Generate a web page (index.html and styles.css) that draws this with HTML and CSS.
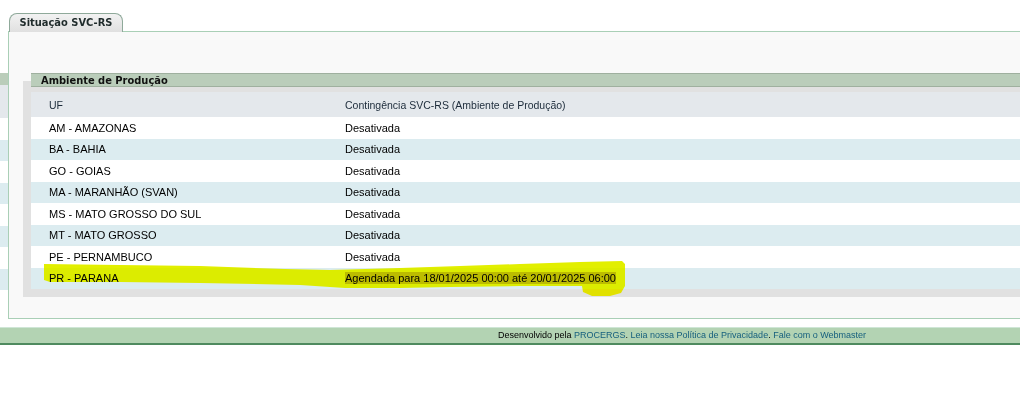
FILE: index.html
```html
<!DOCTYPE html>
<html lang="pt-BR">
<head>
<meta charset="utf-8">
<title>Situação SVC-RS</title>
<link rel="stylesheet" href="styles.css">
</head>
<body>
<div class="wrap">
  <div class="tabs">
    <div class="tab">Situação SVC-RS</div>
  </div>
  <div class="stage">
    <div class="stub">
      <div class="stub-head"></div>
      <div class="stub-row stub-th"></div>
      <div class="stub-row"></div>
      <div class="stub-row alt"></div>
      <div class="stub-row"></div>
      <div class="stub-row alt"></div>
      <div class="stub-row"></div>
      <div class="stub-row alt"></div>
      <div class="stub-row"></div>
      <div class="stub-row alt"></div>
    </div>
    <div class="panel">
      <div class="section">
        <div class="section-title">Ambiente de Produção</div>
        <table class="grid">
          <thead>
            <tr><th class="c1">UF</th><th>Contingência SVC-RS (Ambiente de Produção)</th></tr>
          </thead>
          <tbody>
            <tr><td class="c1">AM - AMAZONAS</td><td>Desativada</td></tr>
            <tr class="alt"><td class="c1">BA - BAHIA</td><td>Desativada</td></tr>
            <tr><td class="c1">GO - GOIAS</td><td>Desativada</td></tr>
            <tr class="alt"><td class="c1">MA - MARANHÃO (SVAN)</td><td>Desativada</td></tr>
            <tr><td class="c1">MS - MATO GROSSO DO SUL</td><td>Desativada</td></tr>
            <tr class="alt"><td class="c1">MT - MATO GROSSO</td><td>Desativada</td></tr>
            <tr><td class="c1">PE - PERNAMBUCO</td><td>Desativada</td></tr>
            <tr class="alt"><td class="c1">PR - PARANA</td><td><span class="sel">Agendada para 18/01/2025 00:00 até 20/01/2025 06:00</span></td></tr>
          </tbody>
        </table>
      </div>
    </div>
  </div>
  <div class="footer">
    Desenvolvido pela <a href="#">PROCERGS</a>. <a href="#">Leia nossa Política de Privacidade</a>. <a href="#">Fale com o Webmaster</a>
  </div>
  <svg class="marker" width="1020" height="407" viewBox="0 0 1020 407" aria-hidden="true">
    <path d="M44 264 L120 265 L200 266 L285 269 L330 270 L400 268 L460 266 L520 264 L580 262 L622 261 L625 264 L625 286 L621 293 L610 296 L592 296 L583 292 L582 286 L520 286 L450 287 L400 288 L345 288 L300 285 L200 283 L120 282 L50 282 L44 280 Z" fill="#e2ef00"/>
  </svg>
</div>
</body>
</html>
```

FILE: styles.css
```css
html, body {
  margin: 0;
  padding: 0;
  background: #ffffff;
  overflow: hidden;
}

.wrap {
  position: relative;
  width: 1364px;
  padding-top: 13px;
  font-family: "Liberation Sans", Arial, sans-serif;
}

.tabs {
  display: flex;
  padding-left: 9px;
  height: 18px;
}

.tab {
  box-sizing: border-box;
  width: 114px;
  height: 19px;
  border: 1px solid #8fa99a;
  border-bottom: none;
  border-radius: 8px 8px 0 0;
  background: linear-gradient(#f2f2f2, #e0e0e0);
  font-family: "DejaVu Sans Condensed", "DejaVu Sans", sans-serif;
  font-weight: bold;
  font-size: 11px;
  line-height: 18px;
  color: #1f2b2b;
  text-align: center;
  position: relative;
  z-index: 1;
}

.stage {
  display: flex;
}

.stub {
  width: 8px;
  padding-top: 42px;
  overflow: hidden;
  flex: none;
}

.stub-head {
  height: 12px;
  background: #bacdba;
}

.stub-row {
  height: 21.5px;
  background: #ffffff;
}

.stub-row.stub-th {
  height: 33px;
  background: #e4e8ec;
}

.stub-row.alt {
  background: #dcecf0;
}

.panel {
  flex: 1;
  border: 1px solid #a9cfb6;
  border-right: none;
  background: #f9f9f9;
  padding: 41px 0 29px 22px;
}

.section {
  background: #ffffff;
  box-shadow: -8px 8px 0 #e1e1e1;
}

.section-title {
  height: 12px;
  border-top: 1px solid #9fb09f;
  border-bottom: 1px solid #9fb09f;
  background: #bacdba;
  padding-left: 10px;
  font-family: "DejaVu Sans Condensed", "DejaVu Sans", sans-serif;
  font-weight: bold;
  font-size: 11px;
  line-height: 14px;
  color: #111111;
}

.grid {
  width: 100%;
  border-collapse: collapse;
  border-top: 5px solid #e1e1e1;
}

.grid th {
  height: 25px;
  padding: 0 0 0 18px;
  background: #e4e8ec;
  font-weight: normal;
  font-size: 10.5px;
  color: #1c2b3a;
  text-align: left;
}

.grid td {
  height: 21.5px;
  padding: 0 0 0 18px;
  font-size: 11px;
  color: #000000;
  background: #ffffff;
}

.grid tr.alt td {
  background: #dcecf0;
}

.grid .c1 {
  width: 278px;
}

.sel {
  background: #bcbcbc;
}

.footer {
  margin-top: 8px;
  height: 15px;
  border-top: 1px solid #cfe6d6;
  border-bottom: 2px solid #4f8a5f;
  background: #b3d3b3;
  text-align: center;
  font-size: 9px;
  line-height: 15px;
  color: #000000;
}

.footer a {
  color: #17607e;
  text-decoration: none;
}

.marker {
  position: absolute;
  left: 0;
  top: 0;
  mix-blend-mode: darken;
  pointer-events: none;
}
```
